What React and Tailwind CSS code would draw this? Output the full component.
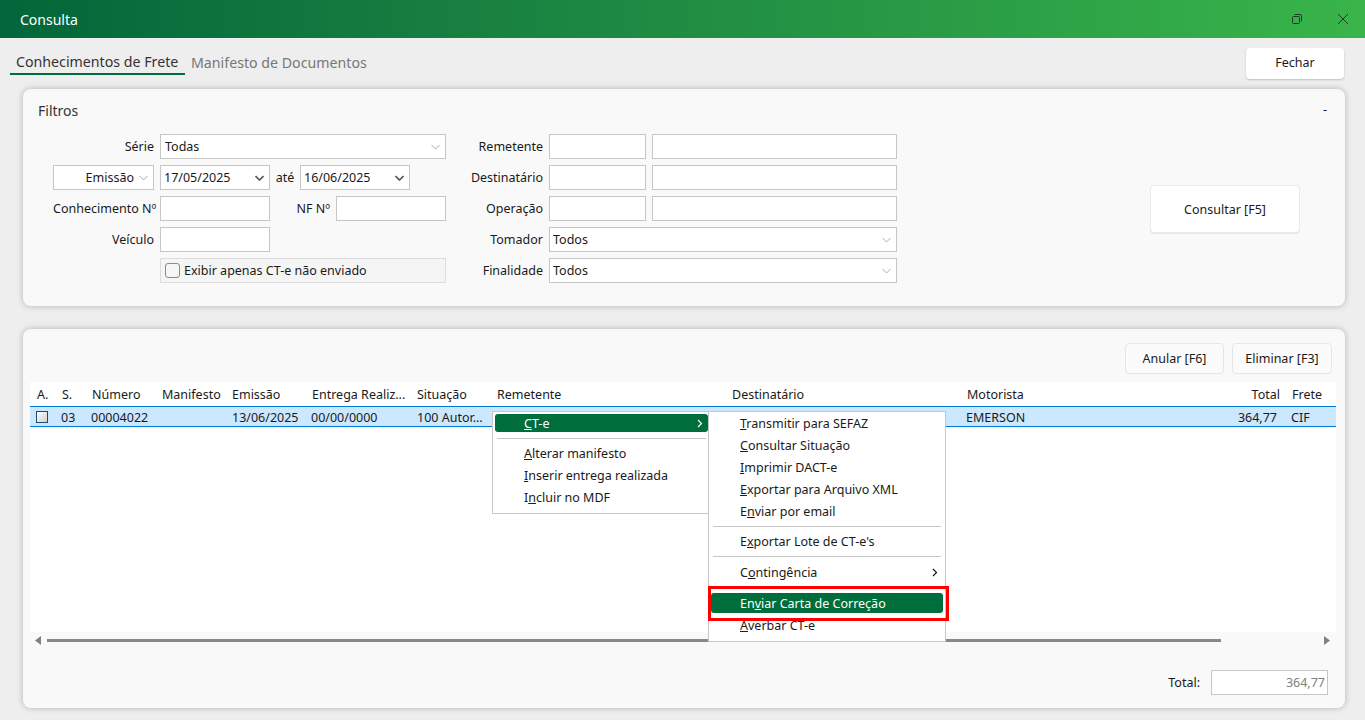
import React from 'react';

const colsClass = 'grid grid-cols-[25px_30px_70px_70px_80px_105px_80px_235px_235px_230px_95px_51px]';

const Chevron = ({ dark }) => (
  <svg width="9" height="6" viewBox="0 0 9 6" fill="none" className="shrink-0">
    <path d="M.5 1l4 4 4-4" stroke={dark ? '#555' : '#aaa'} strokeWidth={dark ? 1.6 : 1} />
  </svg>
);

const Arrow = () => (
  <svg width="6" height="9" viewBox="0 0 6 9" className="shrink-0">
    <path d="M1 1l3.5 3.5L1 8" fill="none" stroke="currentColor" strokeWidth="1.2" />
  </svg>
);

const Input = ({ className = '' }) => (
  <div className={`h-[25px] bg-white border border-[#c6c6c6] ${className}`} />
);

const Select = ({ value, className = '', dark, textClass = 'pl-[4px]' }) => (
  <div className={`h-[25px] bg-white border border-[#c6c6c6] flex items-center justify-between pr-[5px] ${className}`}>
    <span className={`pt-[2px] ${textClass}`}>{value}</span>
    <Chevron dark={dark} />
  </div>
);

const Label = ({ children, className = '' }) => (
  <span className={`text-right shrink-0 whitespace-nowrap pt-[2px] ${className}`}>{children}</span>
);

const RightRow = ({ label, children }) => (
  <div className="flex items-center gap-[6px]">
    <Label className="w-[94px]">{label}</Label>
    {children}
  </div>
);

const MenuItem = ({ before = '', mnemonic, after, active, arrow, inset = 'py-[1px]' }) => (
  <div className={`h-[22px] flex items-center ${inset}`}>
    <div className={`flex-1 h-full flex items-center justify-between pl-[29px] pr-[5px] ${active ? 'bg-[#006d3c] text-white rounded-[3px]' : ''}`}>
      <span className="pt-[2px]">{before}<u>{mnemonic}</u>{after}</span>
      {arrow && <Arrow />}
    </div>
  </div>
);

const MenuSep = ({ className = 'h-[8px]' }) => (
  <div className={`flex items-center px-[2px] ${className}`}>
    <div className="h-px w-full bg-[#c6c6c6]" />
  </div>
);

export default function App() {
  return (
    <div className="w-[1365px] h-[720px] overflow-hidden bg-[#eeeeee] text-[#1a1a1a] text-[12.5px] font-['Noto_Sans',sans-serif] flex flex-col">
      {/* barra de titulo */}
      <div className="h-[38px] shrink-0 bg-gradient-to-r from-[#02663a] to-[#39b54a] flex items-center pl-[20px] pr-[16px]">
        <span className="text-white text-[14px]">Consulta</span>
        <div className="ml-auto flex items-center gap-[34px]">
          <svg width="12" height="12" viewBox="0 0 12 12" fill="none" stroke="#1f3a26" strokeWidth="1">
            <rect x="1.5" y="3.5" width="7" height="7" rx="1" />
            <path d="M3.5 1.5h5.5a1.5 1.5 0 0 1 1.5 1.5v5.5" />
          </svg>
          <svg width="12" height="12" viewBox="0 0 12 12" fill="none" stroke="#1f3a26" strokeWidth="1">
            <path d="M1 1l10 10M11 1L1 11" />
          </svg>
        </div>
      </div>

      {/* abas */}
      <div className="h-[51px] shrink-0 flex pl-[10px] pr-[21px] pt-[10px]">
        <div className="h-[27px] w-[175px] pl-[6px] border-b-2 border-[#006d3c] text-[14.2px] leading-[28px] text-[#333333] whitespace-nowrap">Conhecimentos de Frete</div>
        <div className="h-[27px] pl-[6px] text-[14.2px] leading-[30px] text-[#777777] whitespace-nowrap">Manifesto de Documentos</div>
        <button className="ml-auto h-[31px] w-[98px] bg-white rounded-[4px] shadow-[0_1px_2px_rgba(0,0,0,0.2)]">Fechar</button>
      </div>

      {/* filtros */}
      <div className="h-[217px] shrink-0 mx-[23px] w-[1322px] bg-[#f9f9f9] rounded-lg shadow-[0_0_6px_rgba(0,0,0,0.25)] pl-[30px] pr-[45px]">
        <div className="h-[45px] -ml-[15px] -mr-[27px] flex items-center justify-between pb-[2px]">
          <span className="text-[14px] text-[#333333]">Filtros</span>
          <span>-</span>
        </div>
        <div className="flex">
          <div className="w-[393px] flex flex-col gap-[6px]">
            <div className="flex items-center gap-[6px]">
              <Label className="w-[101px]">Série</Label>
              <Select value="Todas" className="w-[286px]" />
            </div>
            <div className="flex items-center">
              <Select value="Emissão" className="w-[101px] mr-[6px]" textClass="ml-auto pr-[5px]" />
              <Select value="17/05/2025" dark className="w-[110px]" textClass="pl-[3px]" />
              <span className="w-[30px] text-center pt-[2px]">até</span>
              <Select value="16/06/2025" dark className="w-[110px]" textClass="pl-[3px]" />
            </div>
            <div className="flex items-center">
              <Label className="w-[101px] mr-[6px]">Conhecimento Nº</Label>
              <Input className="w-[110px]" />
              <Label className="w-[60px] mr-[6px]">NF Nº</Label>
              <Input className="w-[110px]" />
            </div>
            <div className="flex items-center gap-[6px]">
              <Label className="w-[101px]">Veículo</Label>
              <Input className="w-[110px]" />
            </div>
            <div className="flex items-center gap-[6px]">
              <span className="w-[101px] shrink-0" />
              <div className="h-[25px] w-[286px] bg-[#f5f5f5] border border-[#dcdcdc] flex items-center pl-[4px] gap-[4px]">
                <span className="w-[15px] h-[15px] bg-[#f6f6f6] border border-[#8a8a8a] rounded-[3px]" />
                <span className="pt-[2px]">Exibir apenas CT-e não enviado</span>
              </div>
            </div>
          </div>

          <div className="ml-[3px] flex flex-col gap-[6px]">
            <RightRow label="Remetente">
              <Input className="w-[97px]" />
              <Input className="w-[245px]" />
            </RightRow>
            <RightRow label="Destinatário">
              <Input className="w-[97px]" />
              <Input className="w-[245px]" />
            </RightRow>
            <RightRow label="Operação">
              <Input className="w-[97px]" />
              <Input className="w-[245px]" />
            </RightRow>
            <RightRow label="Tomador">
              <Select value="Todos" className="w-[348px]" textClass="pl-[3px]" />
            </RightRow>
            <RightRow label="Finalidade">
              <Select value="Todos" className="w-[348px]" textClass="pl-[3px]" />
            </RightRow>
          </div>

          <button className="ml-auto mt-[51px] w-[150px] h-[48px] bg-white rounded-[4px] border border-[#eaeaea] shadow-[0_1px_1px_rgba(0,0,0,0.08)] pt-[2px]">
            Consultar [F5]
          </button>
        </div>
      </div>

      {/* resultado */}
      <div className="mt-[23px] h-[379px] shrink-0 ml-[23px] w-[1322px] bg-[#f9f9f9] rounded-lg shadow-[0_0_6px_rgba(0,0,0,0.25)] flex flex-col">
        <div className="h-[53px] shrink-0 flex justify-end gap-[8px] pt-[14px] pr-[13px]">
          <button className="w-[99px] h-[31px] bg-[#fbfbfb] rounded-[4px] border border-[#e6e6e6] pt-[2px]">Anular [F6]</button>
          <button className="w-[100px] h-[31px] bg-[#fbfbfb] rounded-[4px] border border-[#e6e6e6] pt-[2px]">Eliminar [F3]</button>
        </div>

        <div className="relative h-[250px] shrink-0 ml-[7px] w-[1306px] bg-white">
          <div className={`${colsClass} h-[24px] items-center pt-[2px]`}>
            <span className="pl-[7px]">A.</span>
            <span className="pl-[7px]">S.</span>
            <span className="pl-[7px]">Número</span>
            <span className="pl-[7px]">Manifesto</span>
            <span className="pl-[7px]">Emissão</span>
            <span className="pl-[7px]">Entrega Realiz...</span>
            <span className="pl-[7px]">Situação</span>
            <span className="pl-[7px]">Remetente</span>
            <span className="pl-[7px]">Destinatário</span>
            <span className="pl-[7px]">Motorista</span>
            <span className="text-right pr-[5px]">Total</span>
            <span className="pl-[7px]">Frete</span>
          </div>
          <div className={`${colsClass} h-[21px] items-center bg-[#cce8ff] border-y border-[#0078d7]`}>
            <span className="pl-[6px]">
              <span className="block w-[12px] h-[12px] border border-[#1f4a75] bg-gradient-to-br from-white to-[#d0d0d0]" />
            </span>
            <span className="pl-[6px] pt-[2px]">03</span>
            <span className="pl-[6px] pt-[2px]">00004022</span>
            <span />
            <span className="pl-[7px] pt-[2px]">13/06/2025</span>
            <span className="pl-[6px] pt-[2px]">00/00/0000</span>
            <span className="pl-[7px] pt-[2px]">100 Autor...</span>
            <span />
            <span />
            <span className="pl-[6px] pt-[2px]">EMERSON</span>
            <span className="text-right pr-[8px] pt-[2px]">364,77</span>
            <span className="pl-[6px] pt-[2px]">CIF</span>
          </div>

          {/* menu de contexto */}
          <div className="absolute left-[462px] top-[29px] w-[217px] h-[103px] bg-white border border-[#c6c6c6] pl-[2px]">
            <MenuItem mnemonic="C" after="T-e" active arrow inset="py-[2px]" />
            <MenuSep />
            <MenuItem mnemonic="A" after="lterar manifesto" />
            <MenuItem mnemonic="I" after="nserir entrega realizada" />
            <MenuItem before="I" mnemonic="n" after="cluir no MDF" />
          </div>
          <div className="absolute left-[678px] top-[29px] w-[238px] h-[231px] bg-white border border-[#c6c6c6] px-[2px]">
            <MenuItem mnemonic="T" after="ransmitir para SEFAZ" />
            <MenuItem mnemonic="C" after="onsultar Situação" />
            <MenuItem mnemonic="I" after="mprimir DACT-e" />
            <MenuItem mnemonic="E" after="xportar para Arquivo XML" />
            <MenuItem before="E" mnemonic="n" after="viar por email" />
            <MenuSep />
            <MenuItem before="E" mnemonic="x" after="portar Lote de CT-e's" />
            <MenuSep className="h-[9px]" />
            <MenuItem before="C" mnemonic="o" after="ntingência" arrow />
            <div className="h-[9px]" />
            <MenuItem before="En" mnemonic="v" after="iar Carta de Correção" active />
            <MenuItem mnemonic="A" after="verbar CT-e" />
          </div>
          <div className="absolute left-[678px] top-[204px] w-[241px] h-[35px] border-[3px] border-[#ff0000]" />
        </div>

        {/* barra de rolagem */}
        <div className="h-[17px] shrink-0 flex items-center pl-[12px] w-[1307px]">
          <svg width="6" height="9" viewBox="0 0 6 9" className="shrink-0"><path d="M6 0v9L0 4.5z" fill="#808080" /></svg>
          <div className="ml-[6px] w-[1174px] h-[3px] bg-[#888888]" />
          <svg width="6" height="9" viewBox="0 0 6 9" className="ml-auto shrink-0"><path d="M0 0v9l6-4.5z" fill="#808080" /></svg>
        </div>

        <div className="flex items-center justify-end pr-[17px] pt-[21px]">
          <span className="pt-[2px]">Total:</span>
          <div className="ml-[11px] w-[117px] h-[25px] bg-white border border-[#c6c6c6] flex items-center justify-end pr-[2px] pt-[2px] text-[#808080]">364,77</div>
        </div>
      </div>
    </div>
  );
}
